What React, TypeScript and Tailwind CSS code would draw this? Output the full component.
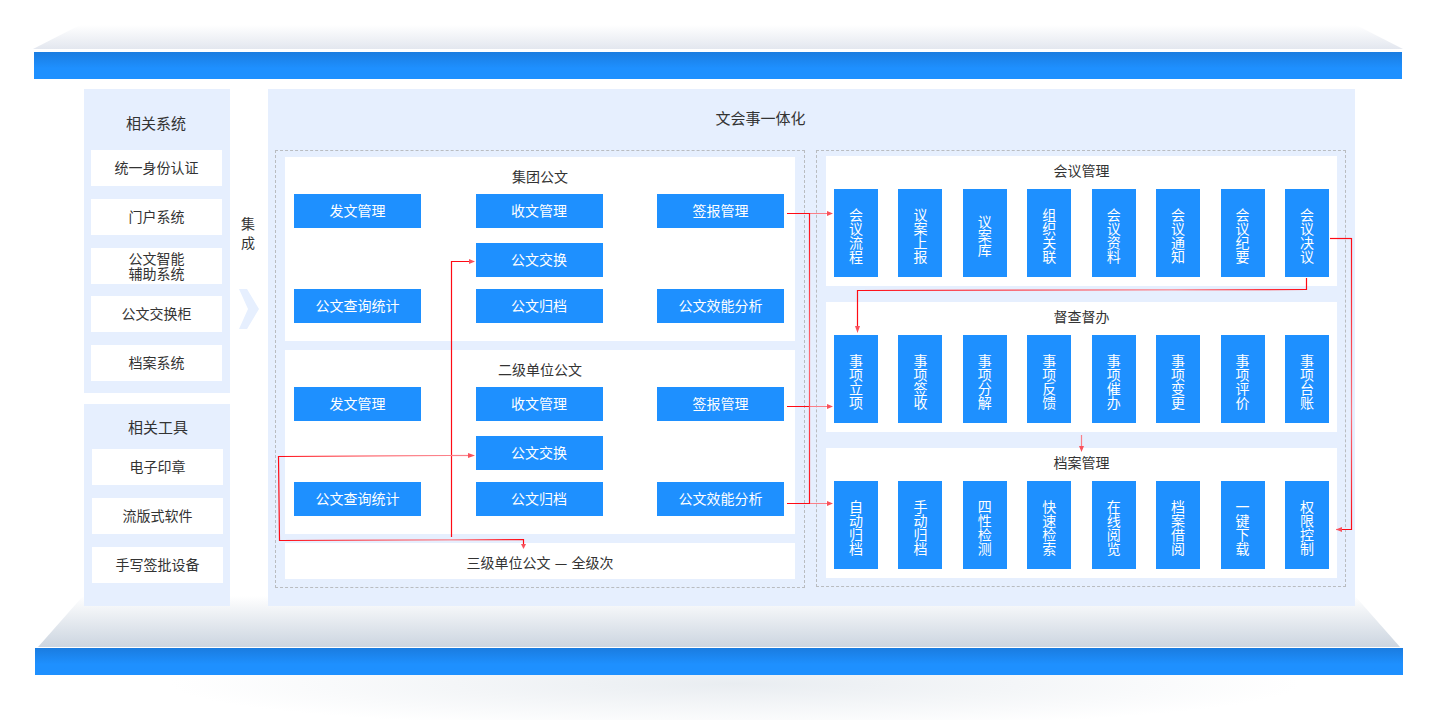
const systems = ["统一身份认证", "门户系统", "公文智能\n辅助系统", "公文交换柜", "档案系统"];
const tools = ["电子印章", "流版式软件", "手写签批设备"];

const meetings = ["会议流程", "议案上报", "议案库", "组织关联", "会议资料", "会议通知", "会议纪要", "会议决议"];
const supervise = ["事项立项", "事项签收", "事项分解", "事项反馈", "事项催办", "事项变更", "事项评价", "事项台账"];
const archives = ["自动归档", "手动归档", "四性检测", "快速检索", "在线阅览", "档案借阅", "一键下载", "权限控制"];

function SideItem({ label }: { label: string }) {
  const twoLines = label.includes("\n");
  return (
    <div className={`flex h-[36px] w-[131px] items-center justify-center whitespace-pre-line bg-white text-center text-sm leading-[15px] text-[#333] ${twoLines ? "-mb-px" : "pb-[2px]"}`}>
      {label}
    </div>
  );
}

function Btn({ label }: { label: string }) {
  return <div className="flex h-[34px] w-[127px] items-center justify-center bg-[#1e90ff] pb-[2px] text-sm text-white">{label}</div>;
}

function DocPanel({ title }: { title: string }) {
  return (
    <div className="h-[184px] w-[510px] bg-white">
      <div className="flex h-[37px] items-center justify-center pt-[1px] text-sm text-[#333]">{title}</div>
      <div className="grid grid-cols-[127px_127px_127px] justify-between pl-[9px] pr-[11px]">
        <Btn label="发文管理" />
        <Btn label="收文管理" />
        <Btn label="签报管理" />
      </div>
      <div className="mt-[15px] grid grid-cols-[127px_127px_127px] justify-between pl-[9px] pr-[11px]">
        <div />
        <Btn label="公文交换" />
        <div />
      </div>
      <div className="mt-[12px] grid grid-cols-[127px_127px_127px] justify-between pl-[9px] pr-[11px]">
        <Btn label="公文查询统计" />
        <Btn label="公文归档" />
        <Btn label="公文效能分析" />
      </div>
    </div>
  );
}

function TallPanel({ title, items }: { title: string; items: string[] }) {
  return (
    <div className="h-[130px] w-[511px] bg-white">
      <div className="flex h-[33px] items-center justify-center pb-[6px] text-sm text-[#333]">{title}</div>
      <div className="flex justify-between px-[8px]">
        {items.map((t) => (
          <div key={t} className="flex h-[88px] w-[44px] items-center justify-center bg-[#1e90ff] pt-[4px]">
            <span className="w-[14px] text-sm leading-[14px] text-white">{t}</span>
          </div>
        ))}
      </div>
    </div>
  );
}

function Connectors() {
  const red = "#ff0a14";
  const pink = "#fb7f88";
  return (
    <svg className="pointer-events-none absolute left-0 top-0 z-20" width="1440" height="720" fill="none" strokeWidth="1.2">
      <defs>
        <linearGradient id="fadeRight" gradientUnits="userSpaceOnUse" x1="279" y1="0" x2="523" y2="0">
          <stop offset="0" stopColor="#ff0a14" />
          <stop offset="0.7" stopColor="#fb7f88" />
          <stop offset="1" stopColor="#ff0a14" />
        </linearGradient>
        <linearGradient id="fadeTop" gradientUnits="userSpaceOnUse" x1="0" y1="213" x2="0" y2="503">
          <stop offset="0" stopColor="#ff0a14" />
          <stop offset="0.5" stopColor="#fa6f79" />
          <stop offset="1" stopColor="#ff0a14" />
        </linearGradient>
        <linearGradient id="fadeLong" gradientUnits="userSpaceOnUse" x1="857" y1="0" x2="1307" y2="0">
          <stop offset="0" stopColor="#ff0a14" />
          <stop offset="0.7" stopColor="#fb8a92" />
          <stop offset="1" stopColor="#ff0a14" />
        </linearGradient>
        <linearGradient id="fadeSide" gradientUnits="userSpaceOnUse" x1="0" y1="238" x2="0" y2="529">
          <stop offset="0" stopColor="#ff0a14" />
          <stop offset="0.6" stopColor="#fa6f79" />
          <stop offset="1" stopColor="#ff0a14" />
        </linearGradient>
      </defs>

      {/* 签报 / 效能 -> 右侧 */}
      <path d="M787 213.5H810M787 406.5H810M787 503.5H810" stroke={red} />
      <path d="M810 213.5H828M810 406.5H828M810 503.5H828" stroke={pink} />
      <path d="M809.5 213V503" stroke="url(#fadeTop)" />
      <path d="M833 213.5l-6-2.5v5zM833 406.5l-6-2.5v5zM833 503.5l-6-2.5v5z" fill="#f9525c" />

      {/* 会议决议 -> 事项立项 */}
      <path d="M1306.5 278V289.5L857.5 290.5V328" stroke="url(#fadeLong)" />
      <path d="M857.5 333l-2.5-7h5z" fill="#f9525c" />

      {/* 会议决议 -> 权限控制 */}
      <path d="M1330 238.5H1351.5" stroke={red} />
      <path d="M1351.5 238V529.5H1342" stroke="url(#fadeSide)" />
      <path d="M1342 529.5H1336" stroke={pink} />
      <path d="M1336 529.5l6-2.5v5z" fill="#f9525c" />

      {/* 督查 -> 档案 */}
      <path d="M1081.5 435V448" stroke={pink} />
      <path d="M1081.5 452l-2.5-6h5z" fill="#f9525c" />

      {/* 左侧交换 */}
      <path d="M451.5 537V261.5H470" stroke={red} />
      <path d="M475 261.5l-6-2.5v5z" fill="#f9525c" />
      <path d="M451 455.5H470" stroke={pink} />
      <path d="M475 455.5l-7-2.5v5z" fill="#f9525c" />
      <path d="M451 455.5L278.5 456.5L279.5 540.5L523.5 539.5V545" stroke="url(#fadeRight)" />
      <path d="M523.5 549l-2.5-5h5z" fill="#f9525c" />
    </svg>
  );
}

export default function App() {
  return (
    <div className="relative isolate h-[720px] w-[1440px] overflow-hidden bg-white pt-[25px] [font-family:'Noto_Sans_CJK_SC','Liberation_Sans',sans-serif]">
      <Connectors />

      <div className="ml-[33px] h-[24px] w-[1370px] bg-gradient-to-b from-white to-[#e3e7ef] [clip-path:polygon(47px_0,1323px_0,1370px_24px,0_24px)]" />
      <div className="ml-[34px] mt-[3px] h-[27px] w-[1368px] bg-gradient-to-b from-[#1a7ce0] to-[#1e90ff] to-60%" />

      <div className="relative z-10 mt-[10px] flex pl-[84px]">
        <div className="flex w-[146px] flex-col gap-[11px]">
          <div className="h-[304px] bg-[#e6effe]">
            <div className="flex h-[61px] items-center justify-center pr-[2px] pt-[8px] text-[15px] text-[#333]">相关系统</div>
            <div className="flex flex-col gap-[13px] pl-[7px]">
              {systems.map((s) => (
                <SideItem key={s} label={s} />
              ))}
            </div>
          </div>
          <div className="h-[202px] bg-[#e6effe]">
            <div className="flex h-[45px] items-center justify-center pl-[2px] pt-[2px] text-[15px] text-[#333]">相关工具</div>
            <div className="flex flex-col gap-[13px] pl-[8px]">
              {tools.map((s) => (
                <SideItem key={s} label={s} />
              ))}
            </div>
          </div>
        </div>

        <div className="flex w-[38px] flex-col items-center pr-[2px] pt-[125px] text-sm leading-[19px] text-[#333]">
          <span>集</span>
          <span>成</span>
          <svg className="ml-[2px] mt-[37px]" width="20" height="40" viewBox="0 0 20 40">
            <path d="M0 0H8L20 20L8 40H0L9 20Z" fill="#e6effe" />
          </svg>
        </div>

        <div className="h-[517px] w-[1087px] bg-[#e6effe]">
          <div className="flex h-[61px] items-center justify-center pb-[3px] pr-[102px] text-[15px] text-[#333]">文会事一体化</div>
          <div className="flex gap-[11px] pl-[7px]">
            <div className="flex h-[438px] w-[530px] flex-col gap-[9px] border border-dashed border-[#b9bcc0] pl-[9px] pt-[6px]">
              <DocPanel title="集团公文" />
              <DocPanel title="二级单位公文" />
              <div className="flex h-[36px] w-[510px] items-center justify-center bg-white pt-[2px] text-sm text-[#333]">
                <span>
                  三级单位公文 <span className="mx-[1px]">—</span> 全级次
                </span>
              </div>
            </div>
            <div className="flex h-[437px] w-[530px] flex-col gap-[16px] border border-dashed border-[#b9bcc0] pl-[9px] pt-[5px]">
              <TallPanel title="会议管理" items={meetings} />
              <TallPanel title="督查督办" items={supervise} />
              <TallPanel title="档案管理" items={archives} />
            </div>
          </div>
        </div>
      </div>

      <div className="-mt-[10px] ml-[36px] h-[51px] w-[1366px] bg-gradient-to-b from-white to-[#ccd5e0] [clip-path:polygon(47px_0,1319px_0,1364px_51px,2px_51px)]" />
      <div className="ml-[35px] mt-[1px] h-[27px] w-[1368px] bg-gradient-to-b from-[#1a7ce0] to-[#1e90ff] to-60%" />
      <div className="ml-[170px] h-[45px] w-[1130px] bg-[radial-gradient(ellipse_50%_100%_at_50%_20%,#e9edf1,#ffffff)]" />
    </div>
  );
}
